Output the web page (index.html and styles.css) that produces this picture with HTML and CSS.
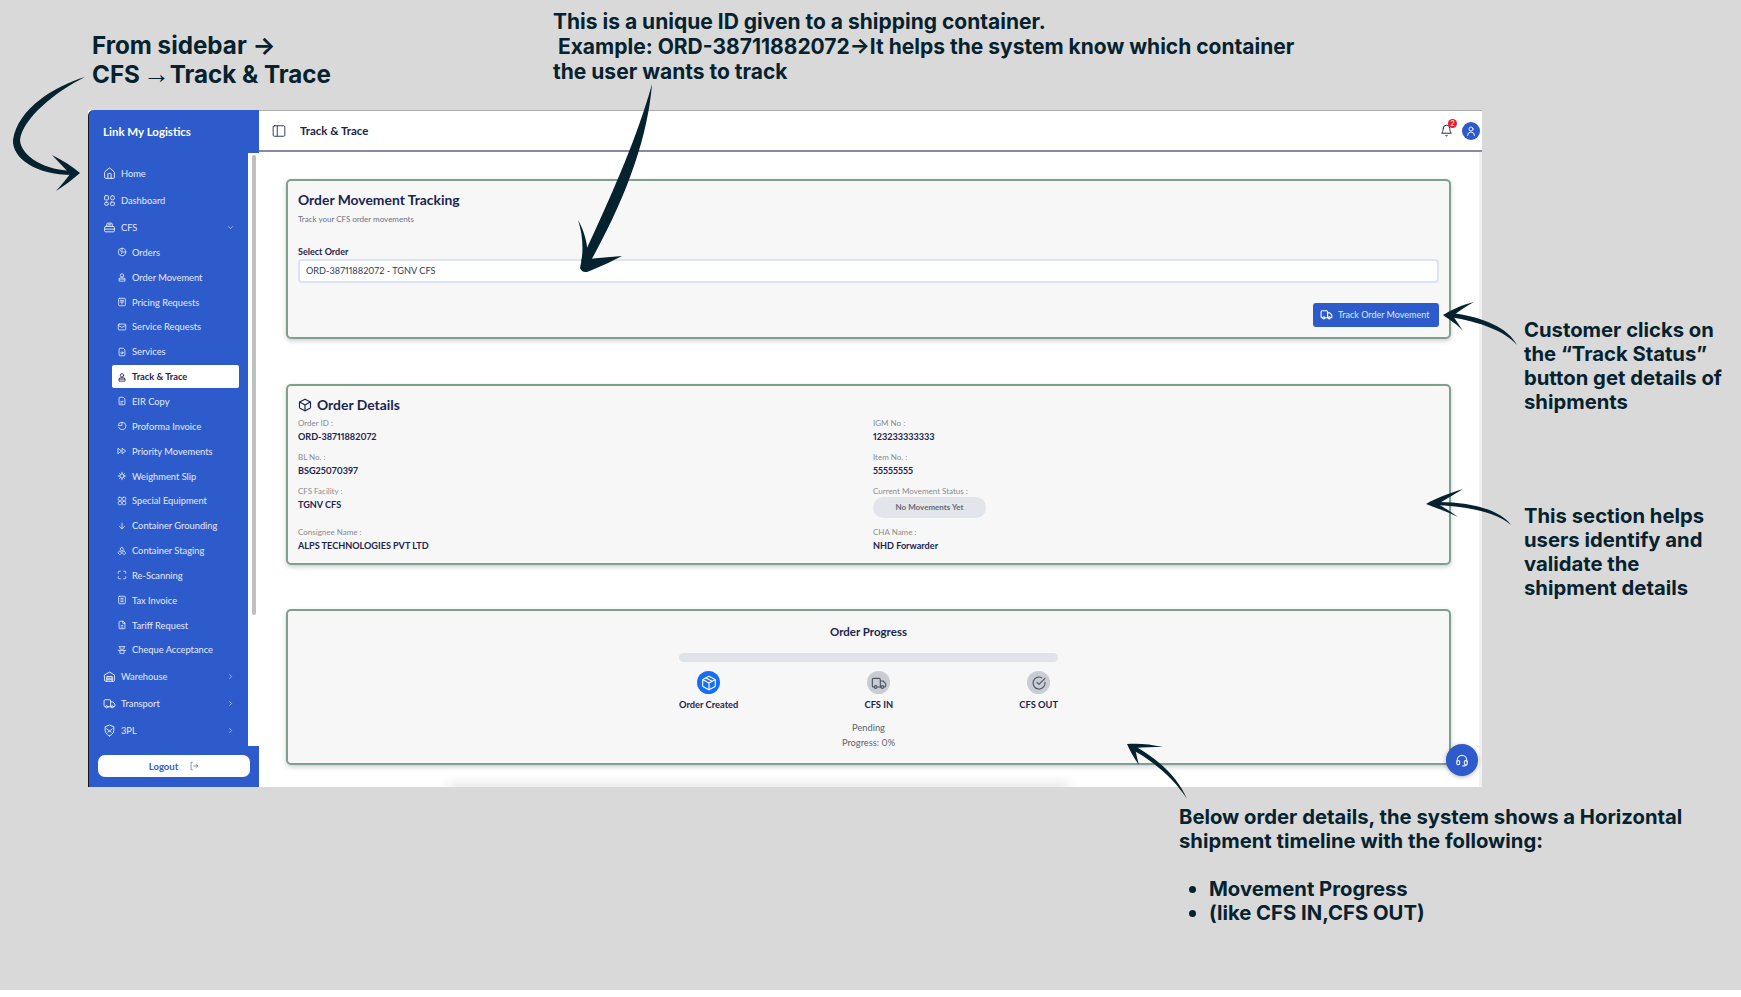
FILE: index.html
```html
<!DOCTYPE html>
<html lang="en">
<head>
  <meta charset="UTF-8">
  <title>Track &amp; Trace walkthrough</title>
  <link rel="stylesheet" href="styles.css">
</head>
<body>
  <div class="canvas">
    <p class="note note-sidebar">From sidebar →<br>CFS <span class="thin-arrow">→</span>Track &amp; Trace</p>
    <p class="note note-id">This is a unique ID given to a shipping container.<br> Example: ORD-38711882072→It helps the system know which container<br>the user wants to track</p>
    <p class="note note-button">Customer clicks on<br>the “Track Status”<br>button get details of<br>shipments</p>
    <p class="note note-section">This section helps<br>users identify and<br>validate the<br>shipment details</p>
    <div class="note note-timeline">
      <p>Below order details, the system shows a Horizontal<br>shipment timeline with the following:</p>
      <ul>
        <li>Movement Progress</li>
        <li>(like CFS IN,CFS OUT)</li>
      </ul>
    </div>

    <div class="app">
      <aside class="sidebar">
        <div class="brand">Link My Logistics</div>
        <div class="sidebar-middle">
          <nav class="nav">
            <a class="nav-item"><svg class="icon" viewBox="0 0 24 24"><path d="M15 21v-8a1 1 0 0 0-1-1h-4a1 1 0 0 0-1 1v8"/><path d="M3 10a2 2 0 0 1 .7-1.5l7-6a2 2 0 0 1 2.6 0l7 6A2 2 0 0 1 21 10v9a2 2 0 0 1-2 2H5a2 2 0 0 1-2-2z"/></svg>Home</a>
            <a class="nav-item"><svg class="icon" viewBox="0 0 24 24"><rect x="3" y="3" width="7" height="8" rx="1.5"/><rect x="14" y="3" width="7" height="8" rx="3.5"/><rect x="3" y="15" width="7" height="6" rx="3"/><rect x="14" y="15" width="7" height="6" rx="1.5"/></svg>Dashboard</a>
            <a class="nav-item"><svg class="icon" viewBox="0 0 24 24"><path d="M7 10V6a2 2 0 0 1 2-2h6a2 2 0 0 1 2 2v4"/><path d="M5 10h14a2 2 0 0 1 2 2v6a2 2 0 0 1-2 2H5a2 2 0 0 1-2-2v-6a2 2 0 0 1 2-2z"/><path d="M3 15h18M10 7h4"/></svg>CFS<svg class="chevron" viewBox="0 0 24 24"><path d="m6 9 6 6 6-6"/></svg></a>

            <a class="sub-item"><svg class="icon" viewBox="0 0 24 24"><circle cx="12" cy="12" r="9"/><path d="m8 9 5 2-2 5M12 3v5M21 12h-6"/></svg>Orders</a>
            <a class="sub-item"><svg class="icon" viewBox="0 0 24 24"><circle cx="12" cy="8" r="4"/><path d="M5 21v-4a3 3 0 0 1 3-3h8a3 3 0 0 1 3 3v4z"/><path d="M5 17h14"/></svg>Order Movement</a>
            <a class="sub-item"><svg class="icon" viewBox="0 0 24 24"><rect x="4" y="3" width="16" height="18" rx="2"/><path d="M8 8h8M8 12h8M12 12v5"/></svg>Pricing Requests</a>
            <a class="sub-item"><svg class="icon" viewBox="0 0 24 24"><rect x="3" y="5" width="18" height="14" rx="2"/><path d="m3 8 9 5 9-5"/></svg>Service Requests</a>
            <a class="sub-item"><svg class="icon" viewBox="0 0 24 24"><path d="M14 3H7a2 2 0 0 0-2 2v14a2 2 0 0 0 2 2h10a2 2 0 0 0 2-2V8z"/><circle cx="12" cy="14" r="2.5"/></svg>Services</a>
            <a class="sub-item active"><svg class="icon" viewBox="0 0 24 24"><circle cx="12" cy="8" r="4"/><path d="M5 21v-4a3 3 0 0 1 3-3h8a3 3 0 0 1 3 3v4z"/><path d="M5 17h14"/></svg>Track &amp; Trace</a>
            <a class="sub-item"><svg class="icon" viewBox="0 0 24 24"><path d="M14 3H7a2 2 0 0 0-2 2v14a2 2 0 0 0 2 2h10a2 2 0 0 0 2-2V8z"/><path d="M9 13h6M9 17h4"/></svg>EIR Copy</a>
            <a class="sub-item"><svg class="icon" viewBox="0 0 24 24"><path d="M13 3a9 9 0 1 1-9 12"/><path d="M11 3a8 8 0 0 0-8 8h8z"/></svg>Proforma Invoice</a>
            <a class="sub-item"><svg class="icon" viewBox="0 0 24 24"><path d="m3 6 8 6-8 6zM13 6l8 6-8 6z"/></svg>Priority Movements</a>
            <a class="sub-item"><svg class="icon" viewBox="0 0 24 24"><circle cx="12" cy="12" r="5"/><path d="M12 3v4M12 17v4M3 12h4M17 12h4M6 6l2 2M16 16l2 2M18 6l-2 2M8 16l-2 2"/></svg>Weighment Slip</a>
            <a class="sub-item"><svg class="icon" viewBox="0 0 24 24"><rect x="3" y="3" width="8" height="8" rx="3"/><rect x="13" y="3" width="8" height="8" rx="3"/><rect x="3" y="13" width="8" height="8" rx="3"/><rect x="13" y="13" width="8" height="8" rx="3"/></svg>Special Equipment</a>
            <a class="sub-item"><svg class="icon" viewBox="0 0 24 24"><path d="M12 5v14M6 13l6 6 6-6"/></svg>Container Grounding</a>
            <a class="sub-item"><svg class="icon" viewBox="0 0 24 24"><path d="m12 3 4 5-4 5-4-5zM7 12l4 5-4 4-4-4zM17 12l4 5-4 4-4-4z"/></svg>Container Staging</a>
            <a class="sub-item"><svg class="icon" viewBox="0 0 24 24"><path d="M3 8V5a2 2 0 0 1 2-2h3M16 3h3a2 2 0 0 1 2 2v3M21 16v3a2 2 0 0 1-2 2h-3M8 21H5a2 2 0 0 1-2-2v-3"/></svg>Re-Scanning</a>
            <a class="sub-item"><svg class="icon" viewBox="0 0 24 24"><rect x="4" y="3" width="16" height="18" rx="2"/><path d="M9 8h6M9 12h6M9 16h6"/></svg>Tax Invoice</a>
            <a class="sub-item"><svg class="icon" viewBox="0 0 24 24"><path d="M14 3H7a2 2 0 0 0-2 2v14a2 2 0 0 0 2 2h10a2 2 0 0 0 2-2V8z"/><path d="M14 3v5h5M10 13h4M10 17h4"/></svg>Tariff Request</a>
            <a class="sub-item"><svg class="icon" viewBox="0 0 24 24"><path d="M5 4h14M7 4v4a2 2 0 0 0 2 2h6a2 2 0 0 0 2-2V4M3 13h18M7 13v7h10v-7"/></svg>Cheque Acceptance</a>

            <a class="nav-item"><svg class="icon" viewBox="0 0 24 24"><path d="M3 9l9-5 9 5v10a2 2 0 0 1-2 2H5a2 2 0 0 1-2-2z"/><path d="M7 21v-9h10v9M7 15h10M7 18h10"/></svg>Warehouse<svg class="chevron" viewBox="0 0 24 24"><path d="m9 6 6 6-6 6"/></svg></a>
            <a class="nav-item"><svg class="icon" viewBox="0 0 24 24"><path d="M14 18V7a2 2 0 0 0-2-2H4a2 2 0 0 0-2 2v9a2 2 0 0 0 2 2h1"/><path d="M15 18H9"/><path d="M14 9h4l4 4v3a2 2 0 0 1-2 2h-1"/><circle cx="17" cy="18" r="2"/><circle cx="7" cy="18" r="2"/></svg>Transport<svg class="chevron" viewBox="0 0 24 24"><path d="m9 6 6 6-6 6"/></svg></a>
            <a class="nav-item"><svg class="icon" viewBox="0 0 24 24"><path d="M12 22s8-3 8-10V5l-8-3-8 3v7c0 7 8 10 8 10z"/><path d="m7 9 5 4 5-4M9 15l3-2 3 2"/></svg>3PL<svg class="chevron" viewBox="0 0 24 24"><path d="m9 6 6 6-6 6"/></svg></a>
          </nav>
          <div class="gutter"><div class="thumb"></div></div>
        </div>
        <div class="sidebar-foot">
          <button class="logout">Logout<svg class="icon" viewBox="0 0 24 24"><path d="M8 3H5v18h3"/><path d="M11 12h10M17 8l4 4-4 4"/></svg></button>
        </div>
      </aside>

      <div class="page">
        <header class="topbar">
          <svg class="icon toggle" viewBox="0 0 24 24"><rect x="2" y="3" width="20" height="18" rx="2"/><path d="M9 3v18"/></svg>
          <span class="topbar-title">Track &amp; Trace</span>
          <div class="topbar-right">
            <div class="bell">
              <svg class="icon" viewBox="0 0 24 24"><path d="M6 8a6 6 0 0 1 12 0c0 7 3 9 3 9H3s3-2 3-9"/><path d="M10.3 21a1.9 1.9 0 0 0 3.4 0"/></svg>
              <span class="badge">2</span>
            </div>
            <div class="avatar"><svg class="icon" viewBox="0 0 24 24"><circle cx="12" cy="8" r="4"/><path d="M5 21a7 7 0 0 1 14 0"/></svg></div>
          </div>
        </header>

        <main class="content">
          <section class="card card-track">
            <h2 class="card-title">Order Movement Tracking</h2>
            <p class="card-sub">Track your CFS order movements</p>
            <label class="field-label">Select Order</label>
            <input class="order-input" type="text" value="ORD-38711882072 - TGNV CFS" readonly>
            <div class="actions">
              <button class="track-btn"><svg class="icon" viewBox="0 0 24 24"><path d="M14 18V7a2 2 0 0 0-2-2H4a2 2 0 0 0-2 2v9a2 2 0 0 0 2 2h1"/><path d="M15 18H9"/><path d="M14 9h4l4 4v3a2 2 0 0 1-2 2h-1"/><circle cx="17" cy="18" r="2"/><circle cx="7" cy="18" r="2"/></svg>Track Order Movement</button>
            </div>
          </section>

          <section class="card card-details">
            <h2 class="card-title with-icon"><svg class="icon" viewBox="0 0 24 24"><path d="M12 2 3.500 6.500a2 2 0 0 0-1 1.700v7.600a2 2 0 0 0 1 1.700L12 22l8.500-4.500a2 2 0 0 0 1-1.700V8.200a2 2 0 0 0-1-1.700z"/><path d="m3 7 9 5 9-5M12 22V12"/></svg>Order Details</h2>
            <div class="details">
              <div><span class="key">Order ID :</span><strong class="val">ORD-38711882072</strong></div>
              <div><span class="key">IGM No :</span><strong class="val">123233333333</strong></div>
              <div><span class="key">BL No. :</span><strong class="val">BSG25070397</strong></div>
              <div><span class="key">Item No. :</span><strong class="val">55555555</strong></div>
              <div><span class="key">CFS Facility :</span><strong class="val">TGNV CFS</strong></div>
              <div><span class="key">Current Movement Status :</span><span class="pill">No Movements Yet</span></div>
              <div><span class="key">Consignee Name :</span><strong class="val">ALPS TECHNOLOGIES PVT LTD</strong></div>
              <div><span class="key">CHA Name :</span><strong class="val">NHD Forwarder</strong></div>
            </div>
          </section>

          <section class="card progress-card">
            <h3 class="progress-title">Order Progress</h3>
            <div class="progress-wrap">
              <div class="progress-bar"></div>
              <div class="steps">
                <div class="step done">
                  <span class="step-icon"><svg class="icon" viewBox="0 0 24 24"><path d="M12 2 3.500 6.500a2 2 0 0 0-1 1.700v7.600a2 2 0 0 0 1 1.700L12 22l8.500-4.500a2 2 0 0 0 1-1.700V8.200a2 2 0 0 0-1-1.700z"/><path d="m3 7 9 5 9-5M12 22V12M7.500 4.500l9 5"/></svg></span>
                  Order Created
                </div>
                <div class="step">
                  <span class="step-icon"><svg class="icon" viewBox="0 0 24 24"><path d="M14 18V7a2 2 0 0 0-2-2H4a2 2 0 0 0-2 2v9a2 2 0 0 0 2 2h1"/><path d="M15 18H9"/><path d="M14 9h4l4 4v3a2 2 0 0 1-2 2h-1"/><circle cx="17" cy="18" r="2"/><circle cx="7" cy="18" r="2"/></svg></span>
                  CFS IN
                </div>
                <div class="step">
                  <span class="step-icon"><svg class="icon" viewBox="0 0 24 24"><path d="M21 11a9 9 0 1 1-5-7"/><path d="m9 11 3 3 9-9"/></svg></span>
                  CFS OUT
                </div>
              </div>
            </div>
            <p class="progress-note first">Pending</p>
            <p class="progress-note">Progress: 0%</p>
          </section>
        </main>
      </div>

      <div class="bottom-shade"></div>
      <button class="help"><svg class="icon" viewBox="0 0 24 24"><path d="M4 15v-3a8 8 0 0 1 16 0v3"/><rect x="3" y="13" width="5" height="7" rx="2"/><rect x="16" y="13" width="5" height="7" rx="2"/><path d="M20 20a4 4 0 0 1-4 2h-3"/></svg></button>
    </div>

    <!-- hand drawn arrows -->
    <svg class="arrows" viewBox="0 0 1741 990">
      <path d="M85 77C55 86 18 108 13 140C12 158 36 176 76 175L76 171C44 171 21 156 20 140C23 118 55 92 85 77Z"/>
      <path d="M52 155C62 160 72 166 80 173C72 180 64 186 56 191C61 185 66 180 70 174C64 168 58 161 52 155Z"/>
      <path d="M652 84C648 135 628 195 589 264L581 261C612 195 638 135 652 84Z"/>
      <path d="M578 220C585 232 588 246 588 259C598 258 610 257 622 256C612 261 602 266 592 270C586 273 582 273 580 268C584 252 583 235 578 220Z"/>
      <path d="M1517 345C1505 331 1480 322 1450 317L1451 313C1484 317 1508 328 1517 345Z"/>
      <path d="M1474 302C1462 305 1451 310 1443 315C1450 320 1458 325 1463 331C1459 325 1456 320 1453 316C1459 311 1466 306 1474 302Z"/>
      <path d="M1511 525C1497 512 1465 506 1433 505L1433 502C1467 501 1500 509 1511 525Z"/>
      <path d="M1463 489C1450 493 1436 498 1426 504C1436 508 1448 512 1458 517C1451 512 1445 508 1438 504C1446 499 1455 494 1463 489Z"/>
      <path d="M1187 799C1175 780 1155 762 1131 749L1133 745C1160 760 1178 778 1187 799Z"/>
      <path d="M1163 747C1150 744 1138 743 1127 744C1130 751 1134 758 1139 765C1137 758 1136 752 1135 748C1144 747 1153 747 1163 747Z"/>
    </svg>
  </div>
</body>
</html>
```

FILE: styles.css
```css
* {
  box-sizing: border-box;
  margin: 0;
  padding: 0;
}

body {
  background-color: #fff;
  font-family: Lato, "Noto Sans", sans-serif;
  font-variant-numeric: proportional-nums;
  color: #1b2450;
  overflow: hidden;
}

.canvas {
  position: relative;
  width: 1741px;
  height: 990px;
  background-color: #d9d9d9;
}

/* annotations around the screenshot */
.note {
  position: absolute;
  font-family: Inter, sans-serif;
  font-weight: 700;
  font-size: 20.25px;
  line-height: 24px;
  color: #06222f;
  white-space: nowrap;
}

.note-sidebar {
  left: 92px;
  top: 31px;
  font-size: 24.2px;
  line-height: 29px;
}

.thin-arrow {
  margin-left: -3px;
  font-family: "Liberation Sans", sans-serif;
  font-size: 27px;
  font-weight: 400;
  line-height: 0;
}

.note-id {
  left: 553px;
  top: 9px;
  font-size: 21px;
  line-height: 25px;
  white-space: pre;
}

.note-button {
  left: 1524px;
  top: 318px;
}

.note-section {
  left: 1524px;
  top: 504px;
}

.note-timeline {
  left: 1179px;
  top: 805px;
}

.note-timeline ul {
  margin-top: 24px;
  padding-left: 30px;
}

.arrows {
  position: absolute;
  left: 0;
  top: 0;
  width: 1741px;
  height: 990px;
  fill: #06222f;
  pointer-events: none;
}

/* the app screenshot */
.app {
  position: absolute;
  left: 88px;
  top: 110px;
  width: 1394px;
  height: 677px;
  display: flex;
  background-color: #fff;
  overflow: hidden;
}

.icon {
  fill: none;
  stroke: currentColor;
  stroke-width: 2;
  stroke-linecap: round;
  stroke-linejoin: round;
  flex-shrink: 0;
}

.sidebar {
  width: 171px;
  display: flex;
  flex-direction: column;
  background-color: #2e5bcb;
  border-left: 1px solid #14171f;
  border-top-left-radius: 6px;
}

.brand {
  height: 43px;
  padding: 13.5px 0 0 14px;
  font-size: 11.5px;
  font-weight: 700;
  line-height: 15px;
  color: #fff;
}

.sidebar-middle {
  display: flex;
  flex: 1;
  min-height: 0;
}

.nav {
  width: 159px;
  padding-top: 7px;
  overflow: hidden;
}

.nav-item,
.sub-item {
  display: flex;
  align-items: center;
  font-size: 9.3px;
  color: #e4eafb;
}

.nav-item {
  height: 27px;
  padding-left: 14px;
  gap: 5px;
}

.nav-item + .sub-item {
  margin-top: -1px;
}

.sub-item + .nav-item {
  margin-top: 1px;
}

.nav-item .icon {
  width: 13px;
  height: 13px;
  stroke-width: 1.8;
}

.chevron {
  width: 9px;
  height: 9px;
  margin-left: auto;
  margin-right: 13px;
  fill: none;
  stroke: #c5d2f5;
  stroke-width: 2;
}

.sub-item {
  height: 24.85px;
  margin: 0 9px 0 23px;
  padding-left: 5px;
  gap: 5px;
  border-radius: 2px;
}

.sub-item .icon {
  width: 10px;
  height: 10px;
}

.sub-item.active {
  height: 23px;
  margin-top: 0.925px;
  margin-bottom: 0.925px;
  background-color: #fff;
  color: #1b2450;
  font-weight: 700;
}

.gutter {
  flex: 1;
  background-color: #fff;
  padding: 2px 3px 0 4px;
}

.thumb {
  height: 460px;
  border-radius: 3px;
  background-color: #bfbfbf;
}

.sidebar-foot {
  height: 41px;
  padding: 9px 9px 0 9px;
}

.logout {
  display: flex;
  align-items: center;
  justify-content: center;
  gap: 11px;
  width: 152px;
  height: 22px;
  border: none;
  border-radius: 7px;
  background-color: #fff;
  color: #2e5bcb;
  font-family: inherit;
  font-size: 9.5px;
  font-weight: 700;
}

.logout .icon {
  width: 10px;
  height: 10px;
  stroke-width: 1.5;
}

.page {
  flex: 1;
  display: flex;
  flex-direction: column;
  min-width: 0;
}

.topbar {
  display: flex;
  align-items: center;
  height: 42px;
  padding: 0 2px 0 13px;
  border-top: 1px solid #adadad;
  border-bottom: 2px solid #8a8aa6;
}

.toggle {
  width: 14px;
  height: 14px;
  stroke-width: 1.6;
  color: #2a3358;
}

.topbar-title {
  margin-left: 14px;
  font-size: 11.5px;
  font-weight: 700;
}

.topbar-right {
  display: flex;
  align-items: center;
  gap: 9px;
  margin-left: auto;
}

.bell {
  position: relative;
  width: 13px;
  height: 13px;
}

.bell .icon {
  display: block;
  width: 13px;
  height: 13px;
  stroke-width: 1.8;
}

.badge {
  position: absolute;
  top: -5px;
  right: -4px;
  width: 9px;
  height: 9px;
  border-radius: 50%;
  background-color: #ee1c2b;
  color: #fff;
  font-size: 7px;
  line-height: 9px;
  text-align: center;
}

.avatar {
  display: flex;
  align-items: center;
  justify-content: center;
  width: 18px;
  height: 18px;
  border-radius: 50%;
  background-color: #2e5bcb;
  color: #fff;
}

.avatar .icon {
  width: 12px;
  height: 12px;
  stroke-width: 1.8;
}

.content {
  flex: 1;
  display: flex;
  flex-direction: column;
  gap: 44.5px;
  padding: 27px 28px 0 27px;
  border-right: 3px solid #f2f2f2;
}

.card {
  padding: 10px;
  border: 2px solid #7fa08c;
  border-radius: 5px;
  background-color: #f7f7f7;
  box-shadow: 0 2px 4px rgba(60, 60, 90, 0.25);
}

.card-track {
  padding-bottom: 10.5px;
}

.card-details {
  padding-bottom: 10.5px;
}

.card-title {
  font-size: 13.9px;
  font-weight: 700;
  line-height: 18px;
}

.with-icon {
  display: flex;
  align-items: center;
  gap: 5px;
}

.with-icon .icon {
  width: 14px;
  height: 14px;
}

.card-sub {
  margin-top: 3.5px;
  font-size: 8px;
  line-height: 12px;
  color: #6b7085;
}

.field-label {
  display: block;
  margin-top: 21px;
  font-size: 9px;
  font-weight: 700;
  line-height: 12px;
}

.order-input {
  display: block;
  width: 100%;
  height: 24px;
  margin-top: 1px;
  padding: 0 6px;
  border: 2px solid #dbe4f7;
  border-radius: 4px;
  background-color: #fff;
  color: #343b58;
  font-family: inherit;
  font-variant-numeric: inherit;
  font-size: 9.2px;
}

.actions {
  display: flex;
  justify-content: flex-end;
  margin-top: 20px;
}

.track-btn {
  display: flex;
  align-items: center;
  gap: 5px;
  width: 126px;
  height: 24px;
  padding-left: 7px;
  border: none;
  border-radius: 3px;
  background-color: #2e5bcb;
  color: #dfe6fa;
  font-family: inherit;
  font-size: 9px;
}

.track-btn .icon {
  width: 13px;
  height: 13px;
  color: #fff;
}

.details {
  display: grid;
  grid-template-columns: 1fr 1fr;
  gap: 9px;
  margin-top: 4.5px;
}

.key {
  display: block;
  font-size: 8px;
  line-height: 11px;
  color: #8a8a8f;
}

.val {
  display: block;
  margin-top: 1px;
  font-size: 9.1px;
  line-height: 13px;
}

.pill {
  display: block;
  width: 113px;
  height: 21px;
  border-radius: 11px;
  background-color: #e2e5ea;
  color: #656b78;
  font-size: 8px;
  font-weight: 700;
  line-height: 21px;
  text-align: center;
}

.progress-card {
  padding-top: 12px;
  padding-bottom: 13px;
  text-align: center;
}

.progress-title {
  font-size: 11.5px;
  font-weight: 700;
  line-height: 18px;
}

.progress-wrap {
  width: 379px;
  margin: 12px auto 0;
}

.progress-bar {
  height: 9px;
  border-radius: 5px;
  background-color: #e0e3e8;
}

.steps {
  display: flex;
  justify-content: space-between;
  margin-top: 9px;
}

.step {
  display: flex;
  flex-direction: column;
  align-items: center;
  gap: 5px;
  font-size: 9.3px;
  font-weight: 700;
  line-height: 12px;
  white-space: nowrap;
}

.step-icon {
  display: flex;
  align-items: center;
  justify-content: center;
  width: 23px;
  height: 23px;
  border-radius: 50%;
  background-color: #c9ccd3;
  color: #4b5563;
}

.step-icon .icon {
  width: 16px;
  height: 16px;
  stroke-width: 1.7;
}

.step.done .step-icon {
  background-color: #166ef5;
  color: #fff;
}

.progress-note {
  margin-top: 1px;
  font-size: 9.3px;
  line-height: 14px;
  color: #5b6172;
}

.progress-note.first {
  margin-top: 10px;
}

.bottom-shade {
  position: absolute;
  left: 360px;
  width: 622px;
  bottom: -6px;
  height: 10px;
  background-color: rgba(0, 0, 0, 0.1);
  filter: blur(6px);
}

.help {
  position: absolute;
  left: 1358px;
  top: 634px;
  display: flex;
  align-items: center;
  justify-content: center;
  width: 32px;
  height: 32px;
  border: none;
  border-radius: 50%;
  background-color: #2e5bcb;
  color: #e4eafb;
  box-shadow: 0 1px 4px rgba(0, 0, 0, 0.3);
}

.help .icon {
  width: 14px;
  height: 14px;
}
```
